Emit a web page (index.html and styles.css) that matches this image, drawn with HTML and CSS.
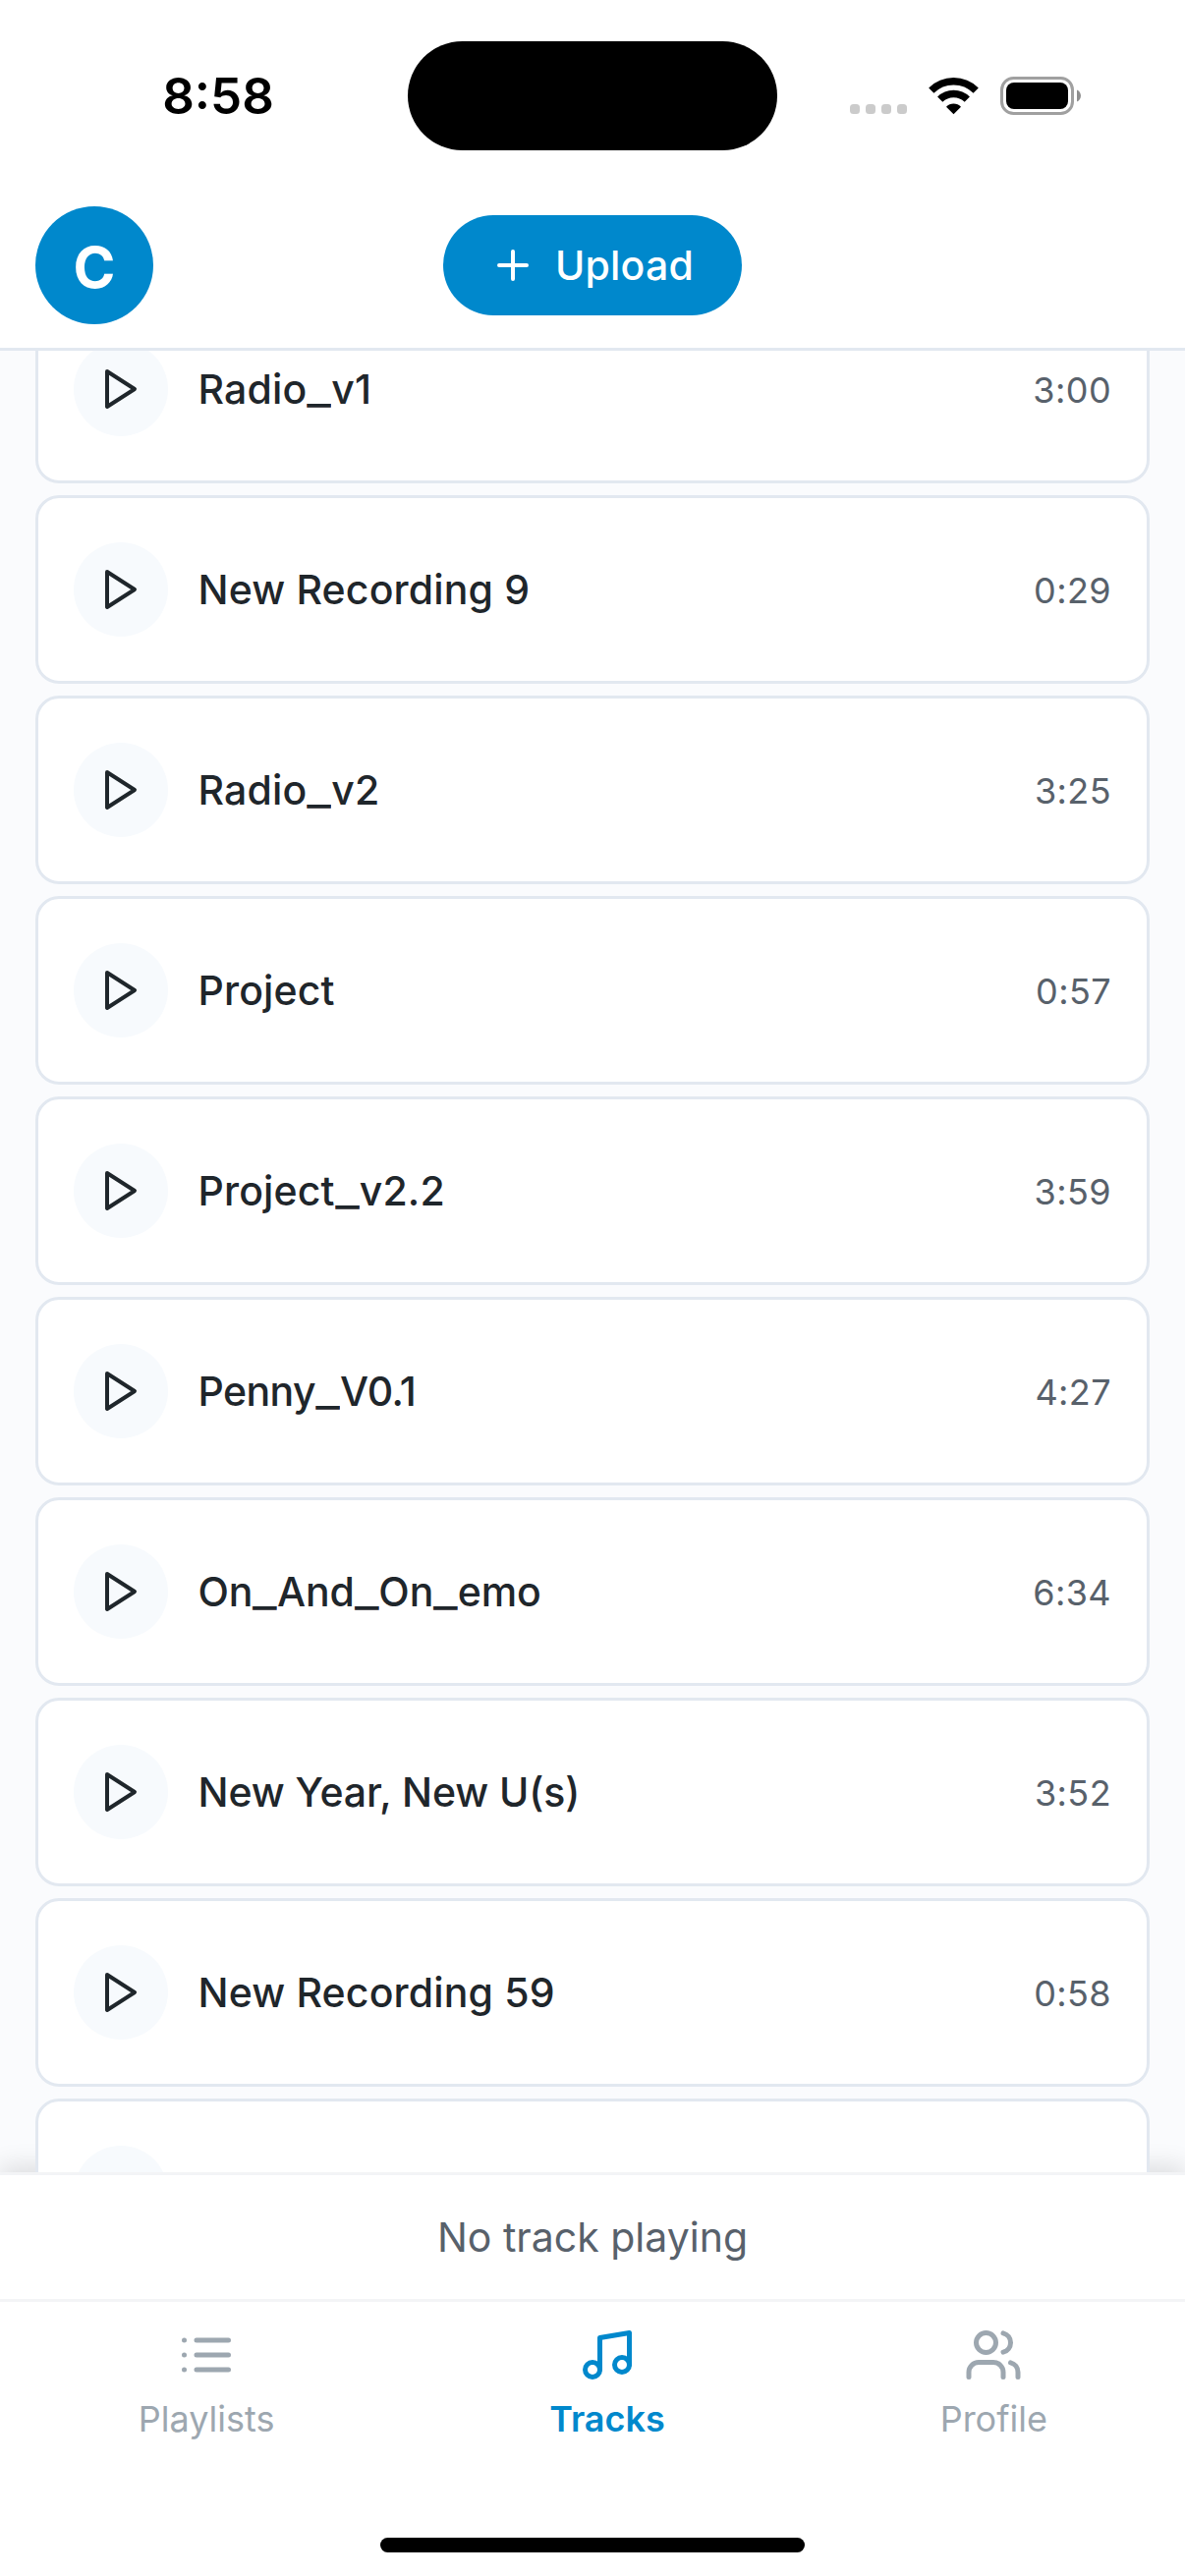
FILE: index.html
```html
<!DOCTYPE html>
<html lang="en">
<head>
<meta charset="utf-8">
<title>Tracks</title>
<link rel="stylesheet" href="styles.css">
</head>
<body>
<div class="app">
  <div class="status-bar">
    <div class="clock">8:58</div>
    <div class="island"></div>
    <svg class="status-icons" viewBox="0 0 236 40" width="236" height="40">
      <g fill="#cbcbcb">
        <rect x="0" y="28" width="10" height="10" rx="3.5"/>
        <rect x="16" y="28" width="10" height="10" rx="3.5"/>
        <rect x="32" y="28" width="10" height="10" rx="3.5"/>
        <rect x="48" y="28" width="10" height="10" rx="3.5"/>
      </g>
      <g fill="none" stroke="#000" stroke-width="7.4">
        <path d="M82.8 14.2A32 32 0 0 1 128.200 14.2"/>
        <path d="M91.700 23.200A19.500 19.500 0 0 1 119.300 23.200"/>
      </g>
      <path d="M105.500 38.300L98 30.700a10.600 10.600 0 0 1 15 0z"/>
      <rect x="154.500" y="1.500" width="72" height="36" rx="12" fill="none" stroke="#a0a0a0" stroke-width="3"/>
      <rect x="159" y="6" width="63" height="27" rx="8"/>
      <path d="M231 13.500c5.300 2.200 5.300 9.800 0 12z" fill="#8e8e8e"/>
    </svg>
  </div>
  <header class="header">
    <div class="avatar">C</div>
    <button class="upload">
      <svg class="icon" viewBox="0 0 24 24" width="48" height="48"><path d="M5 12h14M12 5v14"/></svg>
      <span class="upload-label">Upload</span>
    </button>
  </header>
  <main class="tracks">
    <div class="track"><span class="play"><svg class="icon" viewBox="0 0 24 24" width="48" height="48"><path d="M5 3l14 9-14 9z"/></svg></span><span class="title">Radio<span class="under">_</span>v1</span><span class="time">3:00</span></div>
    <div class="track"><span class="play"><svg class="icon" viewBox="0 0 24 24" width="48" height="48"><path d="M5 3l14 9-14 9z"/></svg></span><span class="title">New Recording 9</span><span class="time">0:29</span></div>
    <div class="track"><span class="play"><svg class="icon" viewBox="0 0 24 24" width="48" height="48"><path d="M5 3l14 9-14 9z"/></svg></span><span class="title">Radio<span class="under">_</span>v2</span><span class="time">3:25</span></div>
    <div class="track"><span class="play"><svg class="icon" viewBox="0 0 24 24" width="48" height="48"><path d="M5 3l14 9-14 9z"/></svg></span><span class="title">Project</span><span class="time">0:57</span></div>
    <div class="track"><span class="play"><svg class="icon" viewBox="0 0 24 24" width="48" height="48"><path d="M5 3l14 9-14 9z"/></svg></span><span class="title">Project<span class="under">_</span>v2.2</span><span class="time">3:59</span></div>
    <div class="track"><span class="play"><svg class="icon" viewBox="0 0 24 24" width="48" height="48"><path d="M5 3l14 9-14 9z"/></svg></span><span class="title title-tight">Penny<span class="under">_</span>V0.1</span><span class="time">4:27</span></div>
    <div class="track"><span class="play"><svg class="icon" viewBox="0 0 24 24" width="48" height="48"><path d="M5 3l14 9-14 9z"/></svg></span><span class="title title-snug">On<span class="under">_</span>And<span class="under">_</span>On<span class="under">_</span>emo</span><span class="time">6:34</span></div>
    <div class="track"><span class="play"><svg class="icon" viewBox="0 0 24 24" width="48" height="48"><path d="M5 3l14 9-14 9z"/></svg></span><span class="title title-snug">New Year, New U(s)</span><span class="time">3:52</span></div>
    <div class="track"><span class="play"><svg class="icon" viewBox="0 0 24 24" width="48" height="48"><path d="M5 3l14 9-14 9z"/></svg></span><span class="title">New Recording 59</span><span class="time">0:58</span></div>
    <div class="track"><span class="play"></span></div>
  </main>
  <div class="player"><span class="player-label">No track playing</span></div>
  <nav class="tabs">
    <div class="tab tab-playlists">
      <svg class="icon" viewBox="0 0 24 24" width="60" height="60"><path d="M8 6h13M8 12h13M8 18h13M3 6h.01M3 12h.01M3 18h.01"/></svg>
      <span class="tab-label">Playlists</span>
    </div>
    <div class="tab tab-tracks active">
      <svg class="icon" viewBox="0 0 24 24" width="60" height="60"><path d="M9 18V5l12-2v13"/><circle cx="6" cy="18" r="3"/><circle cx="18" cy="16" r="3"/></svg>
      <span class="tab-label">Tracks</span>
    </div>
    <div class="tab tab-profile">
      <svg class="icon" viewBox="0 0 24 24" width="60" height="60"><path d="M16 21v-2a4 4 0 0 0-4-4H6a4 4 0 0 0-4 4v2"/><circle cx="9" cy="7" r="4"/><path d="M22 21v-2a4 4 0 0 0-3-3.870M16 3.130a4 4 0 0 1 0 7.750"/></svg>
      <span class="tab-label">Profile</span>
    </div>
  </nav>
  <div class="home"><div class="home-bar"></div></div>
</div>
</body>
</html>
```
FILE: styles.css
```css
* { box-sizing: border-box; }
body {
  margin: 0;
  background: #fff;
  font-family: Inter, "Liberation Sans", sans-serif;
  color: #1f262b;
}
.app {
  width: 1206px;
  height: 2622px;
  display: flex;
  flex-direction: column;
  overflow: hidden;
}
.icon {
  display: block;
  flex: none;
  fill: none;
  stroke: currentColor;
  stroke-width: 2;
  stroke-linecap: round;
  stroke-linejoin: round;
}
.status-bar {
  height: 186px;
  flex: none;
  display: grid;
  grid-template-columns: 415px 376px 1fr;
  align-items: start;
}
.clock {
  margin: 67px 0 0 29px;
  line-height: 62px;
  text-align: center;
  font-size: 51px;
  font-weight: 600;
  color: #000;
}
.island {
  margin-top: 41.500px;
  height: 111px;
  border-radius: 56px;
  background: #000;
}
.status-icons { margin: 78px 0 0 74px; }
.header {
  height: 171px;
  flex: none;
  padding: 24px 36px 0;
  border-bottom: 3px solid #e2e8f0;
  display: grid;
  grid-template-columns: 1fr 304px 1fr;
  align-items: start;
}
.avatar {
  width: 120px;
  height: 120px;
  border-radius: 50%;
  background: #0088cc;
  color: #fff;
  font-size: 58px;
  font-weight: 700;
  line-height: 124px;
  text-align: center;
}
.upload {
  margin: 9px 0 0;
  width: 304px;
  height: 102px;
  padding: 0 0 0 47px;
  border: 0;
  border-radius: 51px;
  background: #0088cc;
  color: #fff;
  display: flex;
  align-items: center;
  gap: 19px;
  font-family: inherit;
}
.upload-label {
  font-size: 41px;
  font-weight: 500;
  letter-spacing: 0.2px;
}
.tracks {
  height: 1854px;
  flex: none;
  position: relative;
  padding: 0 36px;
  background: #fafbfd;
  overflow: hidden;
  display: flex;
  flex-direction: column;
  gap: 12px;
}
/* Shadow cast by the player bar, underneath the cards. */
.tracks::after {
  content: "";
  position: absolute;
  left: 0;
  right: 0;
  top: 100%;
  height: 120px;
  box-shadow: 0 -6px 24px rgba(0, 0, 0, 0.12);
}
.track {
  height: 192px;
  flex: none;
  position: relative;
  z-index: 1;
  padding: 0 36px;
  border: 3px solid #e2e8f0;
  border-radius: 24px;
  background: #fff;
  display: flex;
  align-items: center;
}
.track:first-child { margin-top: -57px; }
.play {
  width: 96px;
  height: 96px;
  border-radius: 50%;
  background: #f7fafd;
  display: flex;
  align-items: center;
  justify-content: center;
}
.title {
  flex: 1;
  margin-left: 30.500px;
  font-size: 41px;
  font-weight: 500;
  line-height: 60px;
  letter-spacing: 0.15px;
}
.title-tight { letter-spacing: -0.6px; }
.title-snug { letter-spacing: -0.08px; }
.under {
  display: inline-block;
  width: 25px;
  text-align: center;
  letter-spacing: 0;
  transform: scaleX(1.3);
}
.title-snug .under { width: 24.500px; }
.time {
  font-size: 36px;
  line-height: 54px;
  margin-top: 2px;
  color: #58616b;
  letter-spacing: 0.4px;
}
.player {
  height: 132px;
  flex: none;
  border-top: 3px solid #f3f4f6;
  border-bottom: 3px solid #f3f4f6;
  background: #fff;
  display: flex;
  align-items: center;
  justify-content: center;
}
.player-label {
  font-size: 41px;
  color: #58616b;
}
.tabs {
  flex: 1;
  padding: 24px 0 0 1px;
  display: flex;
  justify-content: space-around;
  color: #9da7b0;
}
.tab {
  display: flex;
  flex-direction: column;
  align-items: center;
  gap: 8px;
}
.tab-playlists { width: 137px; }
.tab-tracks { width: 116px; }
.tab-profile { width: 108px; }
.tab-label {
  font-size: 36px;
  line-height: 54px;
  white-space: nowrap;
}
.active { color: #0088cc; }
.active .tab-label { font-weight: 600; }
.home {
  height: 39px;
  flex: none;
  display: flex;
  justify-content: center;
}
.home-bar {
  width: 432px;
  height: 15px;
  border-radius: 8px;
  background: #000;
}
```
